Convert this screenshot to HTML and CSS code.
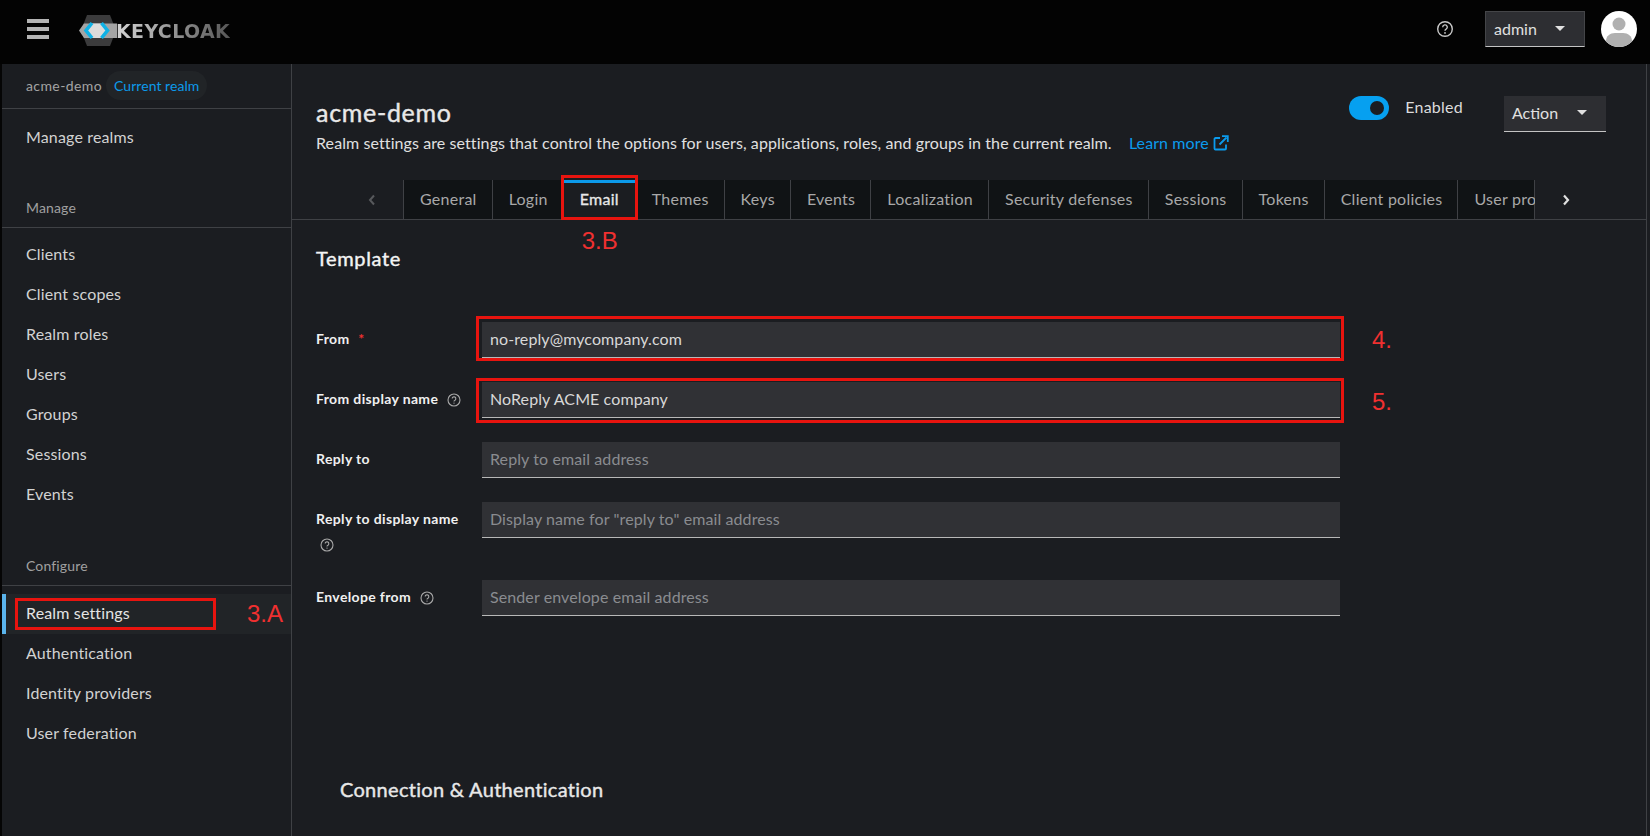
FILE: index.html
```html
<!DOCTYPE html>
<html>
    <head>
        <title>Keycloak - Realm settings</title>
        <link rel="stylesheet" href="styles.css">
    </head>
    <body>
      <header class="masthead">
        <div class="burger"><span></span><span></span><span></span></div>
        <div class="logo">
          <svg class="logo-mark" width="40" height="32" viewBox="0 0 40 32">
            <polygon points="8,0 31,0 37,15.500 31,31 8,31 2,15.500" fill="#3b3b3c"/>
            <polygon points="0,15.500 5,8.500 38,8.500 38,23 5,23" fill="#a4a4a4"/>
            <polygon points="7,15.500 11,8.500 24,8.500 28,15.500 24,23 11,23" fill="#dcdcdc"/>
            <path d="M13 8 L7 15.500 L13 23" fill="none" stroke="#0fb2e6" stroke-width="3.600"/>
            <path d="M22.500 8 L28.500 15.500 L22.500 23" fill="none" stroke="#0fb2e6" stroke-width="3.600"/>
          </svg>
          <span class="logo-text">KEYCLOAK</span>
        </div>
        <div class="masthead-right">
          <svg class="help-top" width="18" height="18" viewBox="0 0 18 18">
            <circle cx="9" cy="9" r="7.300" fill="none" stroke="#c8c8c8" stroke-width="1.400"/>
            <path d="M6.700 7.200a2.300 2.300 0 1 1 3.400 2c-.8.400-1.100.8-1.100 1.500" fill="none" stroke="#c8c8c8" stroke-width="1.400"/>
            <circle cx="9" cy="12.900" r=".9" fill="#c8c8c8"/>
          </svg>
          <div class="select select-user"><span>admin</span><i class="caret"></i></div>
          <svg class="avatar" width="36" height="36" viewBox="0 0 36 36">
            <defs><clipPath id="avatar-clip"><circle cx="18" cy="18" r="18"/></clipPath></defs>
            <circle cx="18" cy="18" r="18" fill="#fff"/>
            <g clip-path="url(#avatar-clip)" fill="#b0b0b0">
              <circle cx="18" cy="13" r="6.500"/>
              <path d="M5 36 V30 C5 25 9 22 14 22 H22 C27 22 31 25 31 30 V36 Z"/>
            </g>
          </svg>
        </div>
      </header>
      <div class="page">
        <nav class="sidebar">
          <div class="realm-row">
            <span class="realm-name">acme-demo</span>
            <span class="realm-chip">Current realm</span>
          </div>
          <a class="nav-item nav-first">Manage realms</a>
          <h3 class="nav-title nav-title-first">Manage</h3>
          <a class="nav-item">Clients</a>
          <a class="nav-item">Client scopes</a>
          <a class="nav-item">Realm roles</a>
          <a class="nav-item">Users</a>
          <a class="nav-item">Groups</a>
          <a class="nav-item">Sessions</a>
          <a class="nav-item">Events</a>
          <h3 class="nav-title">Configure</h3>
          <a class="nav-item nav-current">
            Realm settings
            <span class="mark-box mark-nav"></span>
            <span class="mark-text mark-text-nav">3.A</span>
          </a>
          <a class="nav-item">Authentication</a>
          <a class="nav-item">Identity providers</a>
          <a class="nav-item">User federation</a>
        </nav>
        <main class="content">
          <div class="title-bar">
            <div class="title-block">
              <h1 class="page-title">acme-demo</h1>
              <p class="page-desc">Realm settings are settings that control the options for users, applications, roles, and groups in the current realm.
                <a class="learn-more">Learn more
                  <svg width="16" height="16" viewBox="0 0 16 16">
                    <path d="M13 9.500V13.500a1 1 0 0 1-1 1H2.500a1 1 0 0 1-1-1V4a1 1 0 0 1 1-1H7" fill="none" stroke="#0b9bed" stroke-width="1.800"/>
                    <path d="M6.500 9.500 13.500 2.500M9 1.200h5.800V7" fill="none" stroke="#0b9bed" stroke-width="1.800"/>
                  </svg>
                </a>
              </p>
            </div>
            <div class="toggle-wrap">
              <span class="toggle"><i></i></span>
              <span class="toggle-label">Enabled</span>
            </div>
            <div class="select select-action"><span>Action</span><i class="caret"></i></div>
          </div>
          <div class="tab-bar">
            <div class="tab-arrow">
              <svg width="8" height="12" viewBox="0 0 8 12"><path d="M6 1.500 2 6l4 4.500" fill="none" stroke="#57595c" stroke-width="2"/></svg>
            </div>
            <div class="tabs">
              <a class="tab">General</a>
              <a class="tab">Login</a>
              <a class="tab tab-active">
                Email
                <span class="mark-box mark-tab"></span>
                <span class="mark-text mark-text-tab">3.B</span>
              </a>
              <a class="tab">Themes</a>
              <a class="tab">Keys</a>
              <a class="tab">Events</a>
              <a class="tab">Localization</a>
              <a class="tab">Security defenses</a>
              <a class="tab">Sessions</a>
              <a class="tab">Tokens</a>
              <a class="tab">Client policies</a>
              <a class="tab">User profile</a>
            </div>
            <div class="tab-arrow tab-arrow-right">
              <svg width="8" height="12" viewBox="0 0 8 12"><path d="M2 1.500 6 6l-4 4.500" fill="none" stroke="#e0e0e0" stroke-width="2.200"/></svg>
            </div>
          </div>
          <section class="section">
            <h2 class="section-title">Template</h2>
            <form class="form-grid">
              <label class="form-label">From <em class="required">*</em></label>
              <div class="field">
                <input value="no-reply@mycompany.com">
                <span class="mark-box mark-from"></span>
                <span class="mark-text mark-text-field">4.</span>
              </div>
              <label class="form-label">From display name
                <svg class="help" width="14" height="14" viewBox="0 0 14 14"><use href="#help-glyph"/></svg>
              </label>
              <div class="field">
                <input value="NoReply ACME company">
                <span class="mark-box mark-display"></span>
                <span class="mark-text mark-text-field mark-text-low">5.</span>
              </div>
              <label class="form-label">Reply to</label>
              <div class="field"><input placeholder="Reply to email address"></div>
              <label class="form-label">Reply to display name
                <svg class="help help-wrapped" width="14" height="14" viewBox="0 0 14 14"><use href="#help-glyph"/></svg>
              </label>
              <div class="field"><input placeholder="Display name for &quot;reply to&quot; email address"></div>
              <label class="form-label">Envelope from
                <svg class="help" width="14" height="14" viewBox="0 0 14 14"><use href="#help-glyph"/></svg>
              </label>
              <div class="field"><input placeholder="Sender envelope email address"></div>
            </form>
            <h2 class="section-title section-title-sub">Connection &amp; Authentication</h2>
          </section>
        </main>
      </div>
      <svg width="0" height="0" class="defs">
        <defs>
          <g id="help-glyph">
            <circle cx="7" cy="7" r="6" fill="none" stroke="#a8a8a8" stroke-width="1.100"/>
            <path d="M5.200 5.600a1.800 1.800 0 1 1 2.700 1.600c-.6.300-.9.600-.9 1.200" fill="none" stroke="#a8a8a8" stroke-width="1.100"/>
            <circle cx="7" cy="10.100" r=".7" fill="#a8a8a8"/>
          </g>
        </defs>
      </svg>
    </body>
</html>
```
FILE: styles.css
```css
html, body {
  margin: 0px;
  height: 100%;
  overflow: hidden;
}
body {
  display: flex;
  flex-direction: column;
  background-color: #1b1d21;
  color: #d2d2d2;
  font-family: "Lato", "Liberation Sans", sans-serif;
  font-size: 16px;
}
.defs {
  position: absolute;
}

/* top bar */
.masthead {
  height: 64px;
  flex: none;
  box-sizing: border-box;
  padding-bottom: 6px;
  display: flex;
  align-items: center;
  background-color: #030303;
}
.burger {
  margin-left: 27px;
  width: 22px;
  display: flex;
  flex-direction: column;
  gap: 4px;
}
.burger span {
  height: 4px;
  background-color: #b4b4b4;
}
.logo {
  margin-left: 30px;
  margin-top: 4px;
  display: flex;
  align-items: center;
}
.logo-mark {
  display: block;
}
.logo-text {
  margin-left: -3px;
  font-family: "DejaVu Sans", sans-serif;
  font-weight: 700;
  font-size: 19px;
  letter-spacing: 0.35px;
  background: linear-gradient(90deg, #d4d4d4, #565656);
  -webkit-background-clip: text;
  background-clip: text;
  color: transparent;
}
.masthead-right {
  margin-left: auto;
  display: flex;
  align-items: center;
  padding-right: 13px;
}
.help-top {
  margin-right: 31px;
}
.select {
  display: flex;
  align-items: center;
  justify-content: space-between;
  box-sizing: border-box;
  height: 36px;
  background-color: #2d2e32;
  border-bottom: 1px solid #c4c4c4;
  color: #e0e0e0;
}
.select-user {
  width: 100px;
  padding: 0px 19px 2px 8px;
  border-top: 1px solid #444548;
  border-left: 1px solid #444548;
  border-right: 1px solid #444548;
}
.select-action {
  width: 102px;
  padding: 0px 19px 2px 8px;
}
.caret {
  width: 0px;
  height: 0px;
  border-left: 5px solid transparent;
  border-right: 5px solid transparent;
  border-top: 5px solid #e0e0e0;
}
.avatar {
  margin-left: 16px;
}

/* left nav */
.page {
  flex: 1;
  min-height: 0;
  display: flex;
  border-right: 1px solid #3f4145;
  margin-right: 3px;
}
.sidebar {
  width: 289px;
  flex: none;
  border-left: 2px solid #050505;
  border-right: 1px solid #3f4145;
  letter-spacing: 0.15px;
}
.realm-row {
  height: 45px;
  box-sizing: border-box;
  border-bottom: 1px solid #3f4145;
  padding: 6px 0px 8px 24px;
  display: flex;
  align-items: center;
  font-size: 14px;
}
.realm-name {
  color: #a4a4a4;
  letter-spacing: 0.4px;
}
.realm-chip {
  margin-left: 4px;
  height: 29px;
  display: flex;
  align-items: center;
  padding: 0px 8px;
  border-radius: 15px;
  background-color: #212427;
  color: #0c9aea;
  letter-spacing: 0.05px;
}
.nav-item {
  display: block;
  position: relative;
  height: 40px;
  line-height: 38px;
  padding-left: 24px;
}
.nav-first {
  margin-top: 8px;
  line-height: 40px;
}
.nav-title {
  margin: 41px 0px 8px 0px;
  padding: 0px 0px 9px 24px;
  border-bottom: 1px solid #3f4145;
  font-size: 14px;
  line-height: 20px;
  font-weight: 400;
  color: #a0a0a0;
}
.nav-title-first {
  margin-bottom: 7px;
}
.nav-current {
  background-color: #212427;
  box-shadow: inset 4px 0px 0px #5ab4ec;
  color: #e4e4e4;
}

/* red annotations */
.mark-box {
  position: absolute;
  border: 3px solid #e8140f;
  box-sizing: border-box;
  pointer-events: none;
}
.mark-text {
  position: absolute;
  font-family: "Liberation Sans", sans-serif;
  font-size: 24px;
  line-height: 28px;
  font-weight: 400;
  letter-spacing: 0px;
  -webkit-text-stroke: 0px;
  color: #f03030;
}
.mark-nav {
  left: 13px;
  top: 4px;
  width: 201px;
  height: 32px;
}
.mark-text-nav {
  left: 245px;
  top: 6px;
}
.mark-tab {
  left: -3px;
  top: -5px;
  right: -2px;
  bottom: -1px;
}
.mark-text-tab {
  left: 18px;
  top: 47px;
}
.mark-from {
  inset: -6px -4px -3px -6px;
}
.mark-display {
  inset: -4px -4px -5px -6px;
}
.mark-text-field {
  left: 890px;
  top: 4px;
}
.mark-text-low {
  top: 6px;
}

/* main area */
.content {
  flex: 1;
  min-width: 0;
}
.title-bar {
  height: 116px;
  box-sizing: border-box;
  padding: 32px 40px 0px 24px;
  display: flex;
  align-items: flex-start;
}
.title-block {
  flex: 1;
}
.page-title {
  margin: 2px 0px 0px 0px;
  font-size: 25px;
  line-height: 29px;
  font-weight: 400;
  -webkit-text-stroke: 0.4px #e8e8e8;
  letter-spacing: 0.7px;
  color: #e8e8e8;
}
.page-desc {
  margin: 5px 0px 0px 0px;
  line-height: 21px;
  letter-spacing: 0.09px;
  color: #e0e0e0;
}
.learn-more {
  margin-left: 13px;
  color: #0b9bed;
}
.learn-more svg {
  vertical-align: -2px;
}
.toggle-wrap {
  display: flex;
  align-items: center;
  height: 24px;
  margin-right: 41px;
}
.toggle {
  width: 40px;
  height: 24px;
  border-radius: 12px;
  background-color: #06a0f0;
  position: relative;
}
.toggle i {
  position: absolute;
  right: 5px;
  top: 5px;
  width: 14px;
  height: 14px;
  border-radius: 50%;
  background-color: #1b1d21;
}
.toggle-label {
  margin-left: 16px;
  margin-top: -3px;
  letter-spacing: 0.25px;
  color: #dcdcdc;
}

/* tabs */
.tab-bar {
  display: flex;
  height: 40px;
  box-sizing: border-box;
  border-bottom: 1px solid #3f4145;
}
.tab-arrow {
  flex: none;
  width: 111px;
  display: flex;
  align-items: center;
  justify-content: flex-end;
  padding-right: 27px;
  box-sizing: border-box;
}
.tab-arrow-right {
  width: 111px;
  justify-content: flex-start;
  padding: 0px 0px 0px 27px;
}
.tabs {
  flex: 1;
  min-width: 0;
  display: flex;
  background-color: #101315;
  border-left: 1px solid #3f4145;
  border-right: 1px solid #3f4145;
  overflow: visible;
  clip-path: inset(-10px 0px -40px 0px);
}
.tab {
  flex: none;
  position: relative;
  padding: 0px 15px 0px 16px;
  line-height: 38px;
  letter-spacing: 0.26px;
  color: #a8a8a8;
  border-right: 1px solid #3f4145;
}
.tab-active {
  padding-right: 17px;
  background-color: #1b1d21;
  color: #e8e8e8;
  -webkit-text-stroke: 0.3px #e8e8e8;
  border-right: none;
  box-shadow: inset 0px 3px 0px #0c9aea;
}

/* form */
.section {
  padding: 24px 24px 0px 24px;
}
.section-title {
  margin: 0px 0px 50px 0px;
  font-size: 20px;
  line-height: 28px;
  font-weight: 400;
  -webkit-text-stroke: 0.4px #f4f4f4;
  letter-spacing: 0.65px;
  color: #f4f4f4;
}
.section-title-sub {
  margin: 159px 0px 0px 24px;
  letter-spacing: 0.3px;
  -webkit-text-stroke: 0.4px #e8e8e8;
  color: #e8e8e8;
}
.form-grid {
  display: grid;
  grid-template-columns: 166px 858px;
  row-gap: 24px;
}
.form-label {
  font-size: 14px;
  line-height: 21px;
  padding-top: 6px;
  font-weight: 700;
  letter-spacing: 0.36px;
  color: #f0f0f0;
  white-space: nowrap;
}
.required {
  margin-left: 5px;
  font-style: normal;
  color: #f03030;
}
.help {
  margin-left: 5px;
  vertical-align: -3px;
}
.help-wrapped {
  display: block;
  margin: 9px 0px 4px 4px;
}
.field {
  position: relative;
  height: 36px;
}
.field input {
  display: block;
  box-sizing: border-box;
  width: 100%;
  height: 36px;
  padding: 0px 8px 2px 8px;
  border: none;
  border-bottom: 1px solid #b8b8b8;
  background-color: #303135;
  color: #d8d8d8;
  font: inherit;
  letter-spacing: 0.1px;
  outline: none;
}
.field input::placeholder {
  color: #8a8c90;
}
```
